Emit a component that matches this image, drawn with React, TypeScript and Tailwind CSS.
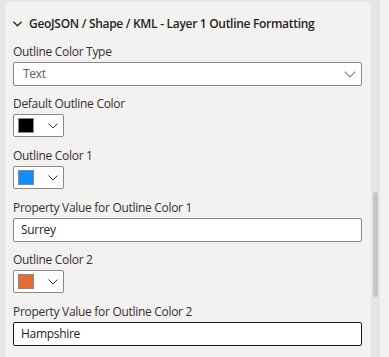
import React from "react";

const font = { fontFamily: '"Segoe UI", "Open Sans", "Noto Sans", sans-serif' };

function Chevron({ className, w = 1 }: { className?: string; w?: number }) {
  return (
    <svg className={className} viewBox="0 0 10 6" fill="none">
      <path d="M0.5 0.5 L5 5 L9.5 0.5" stroke="currentColor" strokeWidth={w} />
    </svg>
  );
}

function Label({ children }: { children: React.ReactNode }) {
  return <div className="h-[20px] leading-[20px] text-[12px] tracking-[-0.3px] text-[#323130]">{children}</div>;
}

function ColorPicker({ color }: { color: string }) {
  return (
    <div className="w-[51px] h-[23px] mb-[9px] bg-white border border-[#8a8886] rounded-[2px] flex items-center pl-[4px]">
      <div className="w-[16px] h-[15px] border border-[#8a8886]" style={{ backgroundColor: color }} />
      <Chevron className="w-[10px] h-[6px] ml-[14px] text-[#323130]" />
    </div>
  );
}

function TextInput({ value, dark }: { value: string; dark?: boolean }) {
  return (
    <div
      className={
        "h-[24px] mb-[8px] bg-white rounded-[2px] flex items-center pl-[7px] text-[12px] tracking-[-0.3px] text-[#252423] " +
        (dark ? "border border-[#1b1a19]" : "border border-[#8a8886]")
      }
    >
      {value}
    </div>
  );
}

export default function App() {
  return (
    <div className="w-[389px] h-[357px] bg-[#e6e5e4] flex overflow-hidden" style={font}>
      <div className="pl-[5px] pt-[2px]">
        <div className="w-[366px] h-[355px] bg-[#f3f2f1] rounded-t-[6px] pl-[8px] pr-[9px]">
          <div className="h-[40px] flex items-center pt-[3px]">
            <Chevron className="w-[9px] h-[6px] text-[#252423]" w={1.4} />
            <span className="ml-[7px] text-[12px] font-semibold tracking-[-0.3px] text-[#252423]">
              GeoJSON / Shape / KML - Layer 1 Outline Formatting
            </span>
          </div>
          <Label>Outline Color Type</Label>
          <div className="h-[24px] mb-[8px] bg-white border border-[#8a8886] rounded-[2px] flex items-center justify-between pl-[9px] pr-[5px] text-[12px] tracking-[-0.3px] text-[#605e5c]">
            <span>Text</span>
            <Chevron className="w-[12px] h-[7px] text-[#8a8886]" />
          </div>
          <Label>Default Outline Color</Label>
          <ColorPicker color="#000000" />
          <Label>Outline Color 1</Label>
          <ColorPicker color="#118dff" />
          <Label>Property Value for Outline Color 1</Label>
          <TextInput value="Surrey" />
          <Label>Outline Color 2</Label>
          <ColorPicker color="#e66c37" />
          <Label>Property Value for Outline Color 2</Label>
          <TextInput value="Hampshire" dark />
        </div>
      </div>
      <div className="w-[9px] h-full relative">
        <div className="absolute left-[2px] top-[192px] w-[5px] h-[105px] rounded-full bg-[#c8c6c4]" />
      </div>
      <div className="w-[9px] h-full bg-[#f3f2f1]" />
    </div>
  );
}
